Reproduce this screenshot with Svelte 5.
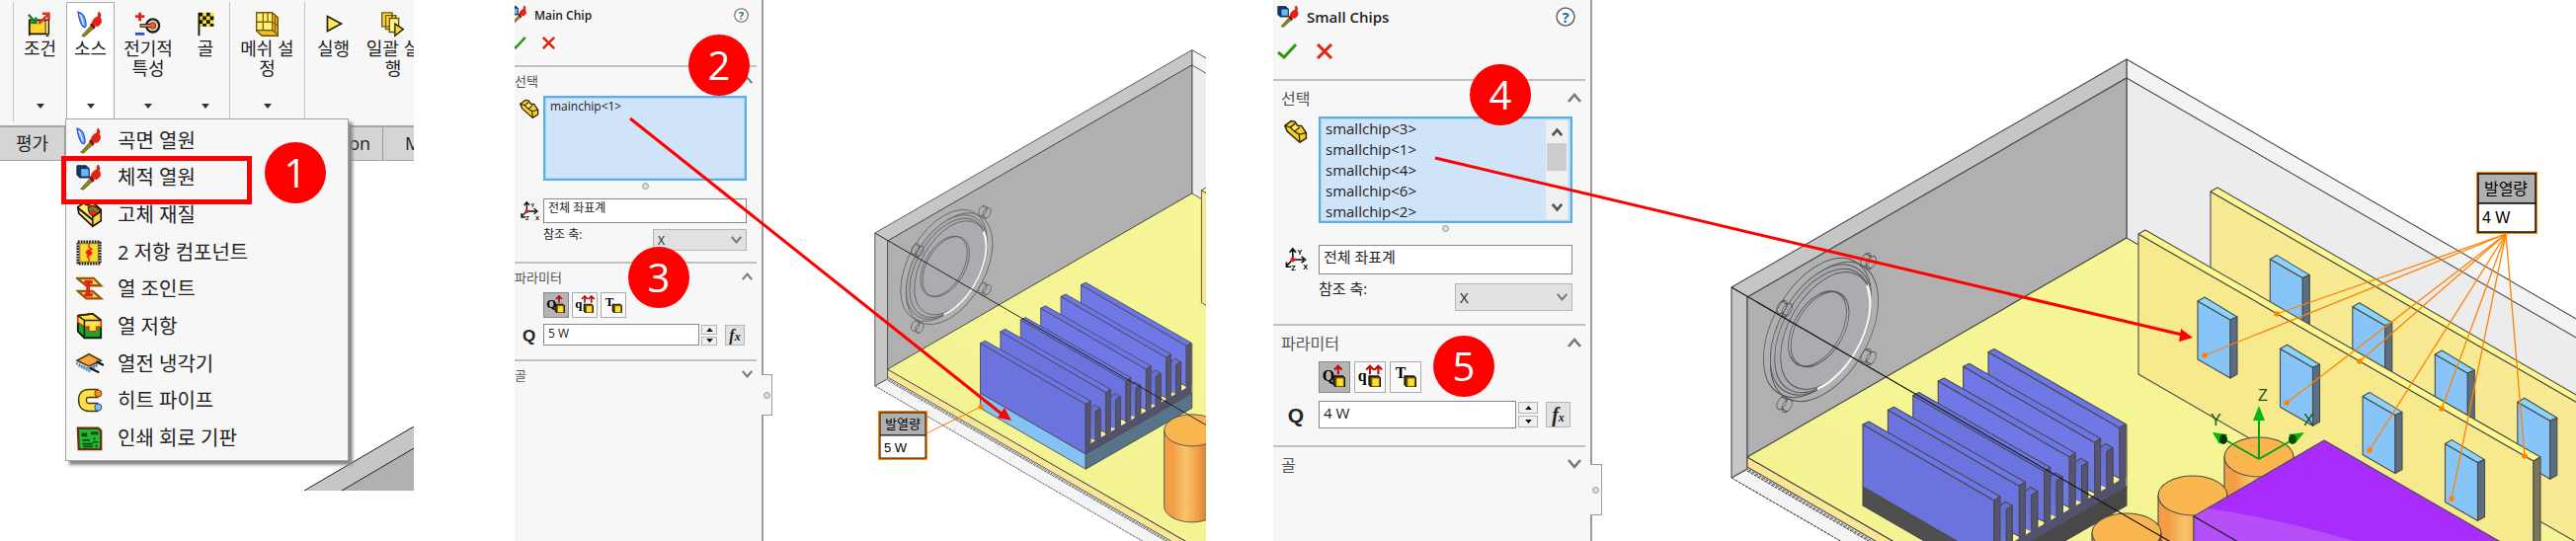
<script>
  const ribbon = [
    { label: '조건', icon: 'condition', size: 'w53', arrow: true },
    { label: '소스', icon: 'source', size: 'w49', arrow: true, active: true },
    { label: '전기적 특성', icon: 'electric', size: 'w68', arrow: true },
    { label: '골', icon: 'goal', size: 'w49', arrow: true, divider: true },
    { label: '메쉬 설정', lines: ['메쉬 설', '정'], icon: 'mesh', size: 'w76', arrow: true, divider: true },
    { label: '실행', icon: 'run', size: 'w57' },
    { label: '일괄 실행', lines: ['일괄 실', '행'], icon: 'batch', size: 'w64' },
  ];

  const menuItems = [
    { label: '곡면 열원', icon: 'source' },
    { label: '체적 열원', icon: 'volume' },
    { label: '고체 재질', icon: 'solid' },
    { label: '2 저항 컴포넌트', icon: 'resistor' },
    { label: '열 조인트', icon: 'joint' },
    { label: '열 저항', icon: 'resistance' },
    { label: '열전 냉각기', icon: 'cooler' },
    { label: '히트 파이프', icon: 'pipe' },
    { label: '인쇄 회로 기판', icon: 'pcb' },
  ];

  const mainChips = ['mainchip<1>'];
  const smallChips = ['smallchip<3>', 'smallchip<1>', 'smallchip<4>', 'smallchip<6>', 'smallchip<2>'];

  let mainPower = $state('5 W');
  let smallPower = $state('4 W');

  // heatsink fins, back to front
  const fins = [5, 4, 3, 2, 1, 0].map((i) => ({ x: 1886 + i * 25.4, y: 430 - i * 14.7 }));

  const chips = [0, 1, 2, 3].map((i) => ({ x: 2225 + i * 83.5, y: 305 + i * 48.2 }));

  const cylinders = [
    [2287, 463],
    [2220, 502],
    [2153, 540],
  ];

  const screws = [
    [1889, 263],
    [1804, 311],
    [1889, 360],
    [1804, 408],
  ];

  const leaders = [
    [2305, 318],
    [2232, 360],
    [2389, 366],
    [2315, 408],
    [2472, 414],
    [2399, 456],
    [2556, 462],
    [2482, 505],
  ];
</script>

{#snippet torch()}
  <path d="M5 27 L15 16 L18 19 L8 28 Z" fill="#8d8420" stroke="#4d4708" stroke-width=".7" />
  <path d="M14 15 q1-2 3-1 l3 3 q0 2-2 3 z" fill="#8c0d05" />
  <path d="M16 14 Q17 8 23 6 Q22 2 24 1 Q27 5 25 7 Q29 13 22 17 Z" fill="#f01c0c" stroke="#8c1005" stroke-width=".6" />
{/snippet}

{#snippet icon(name)}
  <svg class="glyph" viewBox="0 0 30 30" aria-hidden="true">
    {#if name === 'source'}
      <path d="M1 1 Q8 3 9 10 Q11 17 8 18 Q3 16 1 1 Z" fill="#69a8fb" stroke="#1e49ca" stroke-width="1.2" />
      <path d="M3 4 Q6 9 7 15" fill="none" stroke="#d5eaff" stroke-width="1.5" />
      {@render torch()}
    {:else if name === 'volume'}
      <path d="M1 2 h10 l3 3 v10 h-10 l-3-3 z" fill="#173a68" stroke="#06152c" />
      <path d="M5 5 h9 v9 h-9 z" fill="#67b5fa" stroke="#102b51" />
      {@render torch()}
    {:else if name === 'condition'}
      <path d="M3 10 h18 v15 h-18 z" fill="#ffd52d" stroke="#231b00" stroke-width="2" />
      <path d="M21 10 h3 v15 h-3 M3 25 v2 M21 27 h3" fill="#fff2a8" stroke="#231b00" stroke-width="1.5" />
      <path d="M2 4 L10 13 M10 7 v6 h-6" fill="none" stroke="#147d35" stroke-width="2.5" />
      <path d="M13 14 L24 3 M17 3 h7 v7" fill="none" stroke="#e53122" stroke-width="2.8" />
    {:else if name === 'electric'}
      <path d="M6 2 v9 M1 6 h10" stroke="#e02020" stroke-width="3" />
      <path d="M1 25 h10" stroke="#2451dc" stroke-width="3" />
      <circle cx="20" cy="16" r="7" fill="#ddd" stroke="#222" stroke-width="2.5" />
      <circle cx="20" cy="16" r="3.5" fill="#ee5c24" stroke="#8c2a08" />
      <path d="M6 16 h11" stroke="#222" stroke-width="4" />
      <path d="M7 16 h10" stroke="#e7883c" stroke-width="2" />
    {:else if name === 'goal'}
      <path d="M8 2 h16 v15 h-16 z" fill="#f6e32e" />
      <path d="M8 2 h4 v4 h-4 z M16 2 h4 v4 h-4 z M12 6 h4 v4 h-4 z M20 6 h4 v4 h-4 z M8 10 h4 v4 h-4 z M16 10 h4 v4 h-4 z M12 14 h4 v3 h-4 z M20 14 h4 v3 h-4 z" fill="#15130a" />
      <path d="M8 2 V27" stroke="#15130a" stroke-width="2" />
    {:else if name === 'mesh'}
      <path d="M3 2 h17 l6 5 v20 h-17 l-6-5 z" fill="#f3bf24" stroke="#6b4c06" stroke-width="1.5" />
      <path d="M3 2 h17 v19 h-17 z" fill="#fff07a" stroke="#6b4c06" stroke-width="1.2" />
      <path d="M3 12 h17 M10 2 v19 M15 2 v10 M20 12 l6 4 M20 21 l6 5 M23 5 v19" stroke="#8a640a" stroke-width="1.5" />
    {:else if name === 'run'}
      <path d="M8 6 L23 14 L8 22 Z" fill="#f9e95b" stroke="#29240a" stroke-width="1.8" />
    {:else if name === 'batch'}
      <path d="M3 2 h11 v15 h-11 z M7 5 h11 v15 h-11 z" fill="#fbe04c" stroke="#725305" stroke-width="1.5" />
      <path d="M11 8 h10 v15 h-10 z" fill="#fff48c" stroke="#725305" stroke-width="1.5" />
      <path d="M17 14 L26 20 L17 27 Z" fill="#f9df32" stroke="#29240a" stroke-width="1.5" />
    {:else if name === 'solid'}
      <path d="M2 6 L8 2 L13 4 L18 1 L27 9 L27 21 L18 27 L3 13 Z" fill="#fdec77" stroke="#151000" stroke-width="1.8" />
      <path d="M13 6 Q18 3 22 6 L27 10 L19 16 Q13 15 13 6 Z" fill="#e22718" stroke="#151000" />
      <path d="M14 9 Q19 6 24 11" fill="none" stroke="#3ba820" stroke-width="2.5" />
      <path d="M18 17 L27 11 V21 L18 27 Z" fill="#f8d744" stroke="#151000" stroke-width="1.5" />
      <path d="M2 7 L18 20" stroke="#151000" stroke-width="2" />
    {:else if name === 'resistor'}
      <path d="M2 3 h24 v24 h-24 z" fill="none" stroke="#222" stroke-width="3" stroke-dasharray="2 1" />
      <path d="M4 5 h20 v20 h-20 z" fill="#ffd92e" stroke="#70550a" />
      <path d="M14 5 v4 l3 2 -5 2 4 4 -4 2 2 2 v4" fill="none" stroke="#a62b12" stroke-width="1.3" />
      <path d="M14 11 l4 4 -4 4 -4-4 z" fill="#f51515" />
    {:else if name === 'joint'}
      <path d="M1 3 h18 l8 8 h-16 z M2 17 h16 l9 8 h-16 z" fill="#ffd85d" stroke="#95580a" stroke-width="2.5" />
      <path d="M9 7 h9 M13 7 v14 M9 21 h9" stroke="#e92012" stroke-width="4" />
    {:else if name === 'resistance'}
      <path d="M2 3 L18 1 L27 8 V27 H9 L2 20 Z" fill="#19a52b" stroke="#07200a" stroke-width="2" />
      <path d="M2 3 L18 1 L27 8 V15 h-5 v5 h-8 v-5 h-5 L2 10 Z" fill="#ffe543" stroke="#e33514" stroke-width="1.5" />
      <path d="M2 3 L9 8 V27 M9 8 H27 M2 3 L18 1 L27 8" fill="none" stroke="#2a1e00" stroke-width="1.7" />
    {:else if name === 'cooler'}
      <path d="M0 14 L13 20 L27 12 M3 16 L14 22 L23 16" stroke="#548fbd" stroke-width="3" stroke-dasharray="2 1" fill="none" />
      <path d="M1 11 L14 4 L27 11 L14 17 Z" fill="#f6a93b" stroke="#593607" stroke-width="1.7" />
      <path d="M22 12 L30 16 M15 19 L25 24" stroke="#111" stroke-width="2.3" />
    {:else if name === 'pipe'}
      <path d="M24 7 H14 Q7 7 7 14 Q7 22 14 22 H24" fill="none" stroke="#473500" stroke-width="10" />
      <path d="M24 7 H14 Q7 7 7 14 Q7 22 14 22 H24" fill="none" stroke="#ffdf48" stroke-width="7" />
      <circle cx="24" cy="7" r="3.8" fill="#f38b1d" stroke="#6a3608" />
      <circle cx="24" cy="22" r="3.8" fill="#7bc0f5" stroke="#1c4c76" />
    {:else if name === 'pcb'}
      <path d="M2 4 h22 l3 3 v20 h-24 z" fill="#20bb31" stroke="#64300f" stroke-width="2.5" />
      <path d="M6 9 h6 v4 h-6 z M16 8 h8 v3 h-8 z" fill="#084514" />
      <path d="M7 17 h8 M7 21 h11 M8 24 h10 M20 14 v3 M18 19 h6 M22 22 v3" stroke="#084514" stroke-width="1.8" />
    {:else if name === 'part'}
      <path d="M1 8 L9 2 L14 3 L17 8 L22 8 L28 17 V24 L20 29 L4 15 Z" fill="#f7cf29" stroke="#2a1f00" stroke-width="1.8" />
      <path d="M1 8 L8 10 L13 15 L19 19 L20 29 M8 10 L14 5 M13 15 L20 10 M19 19 L28 17" fill="none" stroke="#2a1f00" stroke-width="1.6" />
      <path d="M10 10 L15 7 L17 11 L13 14 Z" fill="#fff27d" />
    {:else if name === 'axes'}
      <path d="M11 15 V3 M7 6 L11 1 L15 6 M11 15 H25 M22 11 L27 15 L22 19 M11 15 L3 23 M3 18 V24 H9" fill="none" stroke="#111" stroke-width="2" />
      <circle cx="11" cy="15" r="3" fill="#f01818" />
      <text x="17" y="9" class="axis">Y</text>
      <text x="24" y="28" class="axis">X</text>
      <text x="9" y="29" class="axis">Z</text>
    {/if}
  </svg>
{/snippet}

{#snippet chevron(down)}
  <svg class="chevron" viewBox="0 0 14 10" aria-hidden="true">
    <path d={down ? 'M1 1 L7 8 L13 1' : 'M1 9 L7 2 L13 9'} fill="none" stroke="#777" stroke-width="2.6" />
  </svg>
{/snippet}

{#snippet powerIcon(letter, arrows)}
  <svg viewBox="0 0 32 32" aria-hidden="true">
    <text x={letter === 'T' ? 5 : 3} y={letter === 'T' ? 17 : 20} class="letter">{letter}</text>
    {#if arrows > 0}
      <path d={arrows === 2 ? 'M16 13 V5 M12 8 L16 4 L20 8 M25 13 V5 M21 8 L25 4 L29 8' : 'M20 13 V5 M16 8 L20 4 L24 8'} fill="none" stroke="#bd0d0d" stroke-width="2.3" />
    {/if}
    <path d="M15 15 h10 l2 2 v9 h-10 l-2-2 z" fill="#4a3b00" stroke="#171200" stroke-width="1.5" />
    <path d="M18 17 h8 v9 h-8 z" fill="#ffdd35" stroke="#806300" />
  </svg>
{/snippet}

{#snippet propertyPanel(id, title, names, power, setPower, scroll)}
  <form class="panel" class:large={scroll} onsubmit={(e) => e.preventDefault()}>
    <header>
      {@render icon('volume')}
      <h2>{title}</h2>
      <button type="button" class="plain help" aria-label="help">
        <svg viewBox="0 0 20 20"><circle cx="10" cy="10" r="9" fill="#fff" stroke="#666" stroke-width="1.5" /><text x="10" y="15.5" text-anchor="middle" class="question">?</text></svg>
      </button>
    </header>
    <div class="actions">
      <button class="plain" aria-label="OK">
        <svg viewBox="0 0 20 16"><path d="M1 9 L7 14 L19 1" fill="none" stroke="#2c9a12" stroke-width="3" /></svg>
      </button>
      <button type="button" class="plain" aria-label="cancel">
        <svg viewBox="0 0 20 16"><path d="M3 1 L17 15 M17 1 L3 15" fill="none" stroke="#dc2412" stroke-width="3" /></svg>
      </button>
    </div>

    <section>
      <h3>선택 {@render chevron(false)}</h3>
      <div class="row">
        <span class="side">{@render icon('part')}</span>
        <div class="list">
          <ul>
            {#each names as name}
              <li>{name}</li>
            {/each}
          </ul>
          {#if scroll}
            <div class="scrollbar">
              {@render chevron(false)}
              <span class="thumb"></span>
              {@render chevron(true)}
            </div>
          {/if}
        </div>
      </div>
      <div class="grip"><i></i></div>
      <div class="row">
        <label class="side" for="{id}-csys" aria-label="좌표계">{@render icon('axes')}</label>
        <input id="{id}-csys" class="csys" value="전체 좌표계" />
      </div>
      <div class="row reference">
        <label for="{id}-axis">참조 축:</label>
        <div class="drop">
          <select id="{id}-axis"><option>X</option></select>
          {@render chevron(true)}
        </div>
      </div>
    </section>

    <section class="parameters">
      <h3>파라미터 {@render chevron(false)}</h3>
      <div class="modes">
        <button type="button" class="pressed" aria-label="Q">{@render powerIcon('Q', 1)}</button>
        <button type="button" aria-label="q">{@render powerIcon('q', 2)}</button>
        <button type="button" aria-label="T">{@render powerIcon('T', 0)}</button>
      </div>
      <div class="row power">
        <label class="side" for="{id}-q">Q</label>
        <input id="{id}-q" value={power} oninput={(e) => setPower(e.target.value)} />
        <div class="spin">
          <button type="button" aria-label="up"><svg viewBox="0 0 10 6"><path d="M0 6 L5 0 L10 6 Z" fill="#111" /></svg></button>
          <button type="button" aria-label="down"><svg viewBox="0 0 10 6"><path d="M0 0 L5 6 L10 0 Z" fill="#111" /></svg></button>
        </div>
        <button type="button" class="fx"><b>f</b><small>x</small></button>
      </div>
    </section>

    <section>
      <h3>골 {@render chevron(true)}</h3>
    </section>
    <span class="handle"><i></i></span>
  </form>
{/snippet}

{#snippet smallChip(x, y)}
  <g transform="translate({x} {y})">
    <path d="M0 0 L33 19 V78 L0 59 Z" fill="#87c5f8" />
    <path d="M0 0 L7 -4 L40 16 L33 19 Z" fill="#8cd3fa" />
    <path d="M33 19 L40 16 V74 L33 78 Z" fill="#5b6f80" />
  </g>
{/snippet}

<!-- open enclosure with the board, heatsink, capacitors and chip cards -->
{#snippet assembly(id, baseFront, baseSide)}
  <defs>
    <linearGradient id="{id}-copper">
      <stop offset="0" stop-color="#f2a04a" />
      <stop offset=".15" stop-color="#f39d45" />
      <stop offset=".38" stop-color="#f7c56c" />
      <stop offset=".62" stop-color="#f29b45" />
      <stop offset="1" stop-color="#8a6238" />
    </linearGradient>
    <linearGradient id="{id}-floor" x1="0" y1="1" x2=".6" y2="0">
      <stop offset="0" stop-color="#f1f08e" />
      <stop offset="1" stop-color="#f8f798" />
    </linearGradient>
  </defs>
  <g class="lines">
    <path d="M2153 60 L2700 376 V700 H2153 Z" fill="#f3f3f3" />
    <path d="M2153 79 L2700 395 V700 H2153 Z" fill="#ececec" />
    <path d="M1753 484 L1769 475 L2153 697 L2120 697 Z" fill="#f4f4f4" stroke-dasharray="3 1" />
    <path d="M1753 291 L2153 60 V79 L1769 301 V475 L1753 484 Z" fill="#c6c6c6" />
    <path d="M1769 301 L2153 79 V241 L1769 463 Z" fill="#b0b0b0" />
    <path d="M1769 463 L2300 770 V780 L1769 473 Z" fill="#fae795" />
    <path d="M1769 463 L2153 241 L2700 557 V1000 Z" fill="url(#{id}-floor)" />
    <path d="M1769 477 L2200 726" fill="none" stroke-dasharray="3 1" />

    <g class="fan" transform="matrix(.866 -.5 0 1 1840 332)">
      <circle r="63" />
      <circle cx="8" cy="8" r="63" />
      <circle cx="4" cy="4" r="59" fill="#a9aaae" />
      <circle cx="6" cy="6" r="56" />
      <circle cx="10" cy="8" r="53" fill="#abacb2" />
      <path d="M58 -14 A56 56 0 0 1 0 62" class="glare" />
      <circle cx="3" cy="3" r="34" />
      <circle cx="0" cy="1" r="34" />
    </g>
    {#each screws as [x, y]}
      <g class="fan" transform="matrix(.866 -.5 0 1 {x} {y})">
        <circle r="6" />
        <circle cx="6" cy="6" r="6" />
        <path d="M0 -6 L6 0 M0 6 L6 12" />
      </g>
    {/each}

    <path d="M2238 194 L2700 460 V602 L2238 336 Z" fill="#f7ea93" />
    <path d="M2238 194 L2245 190 L2700 453 V460 Z" fill="#fdf992" />
    {#each chips as chip}
      {@render smallChip(chip.x + 73.3, chip.y - 42.4)}
    {/each}
    <path d="M2165 237 L2565 467 V610 L2165 379 Z" fill="#f7ea8d" />
    <path d="M2165 237 L2172 233 L2572 463 L2565 467 Z" fill="#fdf98f" />
    <path d="M2565 467 L2572 463 V610 H2565 Z" fill="#7b7559" />
    {#each chips as chip}
      {@render smallChip(chip.x, chip.y)}
    {/each}

    <path d="M1886 493 L2019 570 V589 L1886 512 Z" fill={baseFront} />
    <path d="M2019 570 L2153 493 V512 L2019 589 Z" fill={baseSide} />
    {#each fins as fin, i}
      <g transform="translate({fin.x} {fin.y})">
        <path d="M0 0 L133 77 V{i === 5 ? 140 : 128} L0 63 Z" fill={i < 3 ? '#7078e6' : '#6b73df'} />
        <path d="M0 0 L6 -3 L139 73 L133 77 Z" fill="#6b76eb" />
        <path d="M133 77 L139 73 V126 L133 130 Z" fill="#555573" />
        {#if i < 5}
          <path d="M80 71 L120 101 V138 L80 120 Z" fill="#6d76dd" stroke="none" />
          <path d="M113 97 L119 93 L126 97 L120 101 V138 M120 101 L126 97 V134" fill="#666fd8" />
          <path d="M120 101 L126 97 V134 L120 138 Z" fill="#555573" />
        {/if}
      </g>
    {/each}
    <path d="M2019 560 L2152 483 V493 L2019 570 Z" fill="#52526f" stroke="none" />
    <path d="M2019 507 V570 L2153 493 V430" fill="none" />

    {#each cylinders as [x, y]}
      <path d="M{x - 35} {y} V{y + 96} A35 20 0 0 0 {x + 35} {y + 96} V{y} Z" fill="url(#{id}-copper)" />
      <ellipse cx={x} cy={y} rx="35" ry="20" fill="#f9b64e" />
    {/each}
    <path d="M2221 523 L2353 446 L2700 646 V800 H2221 Z" fill="#a92bfd" />
    <path d="M2221 523 L2700 800 H2221 Z" fill="#b250f9" />
    <path d="M2236 515 Q2310 526 2390 550 H2268 L2222 523 Z" fill="#b64ff8" stroke="none" />
    <path d="M2221 523 L2700 800" stroke="#222" fill="none" />
    <path d="M1753 291 L2196 548 L2240 574" stroke="#111" fill="none" />
  </g>
{/snippet}

<main>
  <figure class="command">
    <svg class="corner" viewBox="0 0 111 65" aria-hidden="true">
      <path d="M0 65 L111 0 V65 Z" fill="#c6c6c6" />
      <path d="M38 65 L111 22 V65 Z" fill="#b0b0b0" />
      <path d="M0 65 L111 0 M38 65 L111 22" stroke="#222" fill="none" />
    </svg>
    <nav class="ribbon">
      <span class="edge"></span>
      {#each ribbon as tool}
        <button class="tool {tool.size}" class:active={tool.active} class:divider={tool.divider}>
          {@render icon(tool.icon)}
          <span class="caption">
            {#each tool.lines ?? tool.label.split(' ') as line}
              <span>{line}</span>
            {/each}
          </span>
          {#if tool.arrow}
            <svg class="caret" viewBox="0 0 8 5" aria-hidden="true"><path d="M0 0 H8 L4 5 Z" fill="#30343a" /></svg>
          {/if}
        </button>
      {/each}
    </nav>
    <div class="tabs">
      <button class="first">평가</button>
      <button class="second">on</button>
      <button>M</button>
    </div>
    <ul class="menu">
      {#each menuItems as item}
        <li><button>{@render icon(item.icon)}{item.label}</button></li>
      {/each}
    </ul>
    <span class="highlight"></span>
    <span class="badge one">1</span>
  </figure>

  <figure class="step">
    {@render propertyPanel('main', 'Main Chip', mainChips, mainPower, (v) => (mainPower = v), false)}
    <svg class="scene" viewBox="773 0 448 548" preserveAspectRatio="xMinYMin slice">
      <g transform="translate(-521 2.5) scale(.8025)">
        {@render assembly('a', '#83c2f4', '#587488')}
      </g>
      <path d="M938 439 L993 412" stroke="#ff8200" />
      <circle cx="993" cy="412" r="2.5" fill="#ff8200" />
      <g class="tag">
        <rect x="889" y="416" width="50" height="50" fill="#ff8200" />
        <path d="M891 418 h46 v23 h-46 z" fill="#b0b0b0" stroke="#111" />
        <path d="M891 441 h46 v23 h-46 z" fill="#fff" stroke="#111" />
        <text x="914" y="434" text-anchor="middle" font-size="13">발열량</text>
        <text x="895" y="458" font-size="13">5 W</text>
      </g>
    </svg>
    <svg class="pointer" viewBox="521 0 700 548" preserveAspectRatio="xMinYMin slice" aria-hidden="true">
      <path d="M638 120 L1015 420" stroke="#f00" stroke-width="3" />
      <path d="M1024 426 L1010 423 L1017 413 Z" fill="#f00" />
    </svg>
    <span class="badge two">2</span>
    <span class="badge three">3</span>
  </figure>

  <figure class="step">
    {@render propertyPanel('small', 'Small Chips', smallChips, smallPower, (v) => (smallPower = v), true)}
    <svg class="scene" viewBox="1612 0 996 548" preserveAspectRatio="xMinYMin slice">
      {@render assembly('b', '#4f4f4f', '#484848')}
      <g stroke="#00a40e" stroke-width="2" fill="#00b80e">
        <path d="M2287 465 V420 M2287 465 L2322 445 M2287 465 L2250 444" fill="none" />
        <path d="M2287 411 L2281 426 H2293 Z" stroke="none" />
        <path d="M2333 438 L2317 440 L2324 449 Z" stroke="none" />
        <path d="M2240 438 L2255 440 L2247 450 Z" stroke="none" />
        <ellipse cx="2321" cy="445" rx="4" ry="5" fill="#064c0a" stroke="none" />
        <ellipse cx="2251" cy="445" rx="4" ry="5" fill="#053508" stroke="none" />
      </g>
      <g class="triad">
        <text x="2286" y="406">Z</text>
        <text x="2332" y="431">X</text>
        <text x="2238" y="431">Y</text>
      </g>
      {#each leaders as [x, y]}
        <path d="M2537 237 L{x} {y}" stroke="#ff8200" stroke-width="1.3" />
        <circle cx={x} cy={y} r="2.8" fill="#ff8200" />
      {/each}
      <g class="tag">
        <rect x="2507" y="174" width="62" height="63" fill="#ff8200" />
        <path d="M2509 176 h58 v30 h-58 z" fill="#b0b0b0" stroke="#111" stroke-width="1.5" />
        <path d="M2509 206 h58 v29 h-58 z" fill="#fff" stroke="#111" stroke-width="1.5" />
        <text x="2537" y="197" text-anchor="middle" font-size="16">발열량</text>
        <text x="2513" y="226" font-size="16">4 W</text>
      </g>
    </svg>
    <svg class="pointer" viewBox="1289 0 1319 548" preserveAspectRatio="xMinYMin slice" aria-hidden="true">
      <path d="M1453 160 L2209 339" stroke="#f00" stroke-width="3" />
      <path d="M2220 342 L2206 346 L2208 333 Z" fill="#f00" />
    </svg>
    <span class="badge four">4</span>
    <span class="badge five">5</span>
  </figure>
</main>

<style>
  :global(body) {
    margin: 0;
    background: #fff;
  }

  main {
    display: grid;
    grid-template-columns: 419fr 102px 700fr 68px 1319fr;
    min-height: 100vh;
    overflow: hidden;
    color: #222;
    font-family: 'Open Sans', 'Noto Sans CJK KR', sans-serif;
  }

  main > :nth-child(2) {
    grid-column: 3;
  }

  main > :nth-child(3) {
    grid-column: 5;
  }

  figure {
    position: relative;
    margin: 0;
    min-width: 0;
    overflow: hidden;
  }

  button,
  input,
  select {
    box-sizing: border-box;
    margin: 0;
    padding: 0;
    color: inherit;
    font: inherit;
  }

  ul {
    margin: 0;
    padding: 0;
    list-style: none;
  }

  svg {
    display: block;
  }

  .glyph {
    flex: none;
    width: 28px;
    height: 28px;
  }

  .axis {
    font: bold 9px 'Liberation Sans', sans-serif;
  }

  /* ribbon and menu */
  .command {
    height: 497px;
  }

  .corner {
    position: absolute;
    right: 0;
    bottom: 0;
    width: 111px;
    height: 65px;
  }

  .ribbon {
    display: flex;
    box-sizing: border-box;
    height: 127px;
    padding: 2px 0 4px;
    background: #f7f7f7;
  }

  .edge {
    flex: none;
    box-sizing: border-box;
    width: 14px;
    border-right: 1px solid #c4c4c4;
  }

  .tool {
    display: flex;
    flex: none;
    flex-direction: column;
    align-items: center;
    padding: 9px 0 13px;
    border: 0;
    background: none;
    font-size: 18px;
    line-height: 20px;
  }

  .tool.active {
    border: 1px solid #aaa;
    background: #fff;
    padding: 8px 0 12px;
  }

  .tool.divider {
    border-right: 1px solid #c4c4c4;
  }

  .w49 { width: 49px; }
  .w53 { width: 53px; }
  .w57 { width: 57px; }
  .w64 { width: 64px; }
  .w68 { width: 68px; }
  .w76 { width: 76px; }

  .caption {
    display: flex;
    flex-direction: column;
    white-space: nowrap;
  }

  .caret {
    width: 8px;
    height: 5px;
    margin-top: auto;
  }

  .tabs {
    display: flex;
    height: 33px;
    border-top: 2px solid #a5a5a5;
    border-bottom: 1px solid #a5a5a5;
    background: #d4d4d4;
  }

  .tabs button {
    flex: none;
    border: 0;
    border-right: 1px solid #999;
    background: none;
    font-size: 18px;
    line-height: 33px;
  }

  .tabs .first {
    width: 66px;
  }

  .tabs .second {
    width: 322px;
    padding-right: 12px;
    text-align: right;
  }

  .tabs button:last-child {
    padding-left: 22px;
  }

  .menu {
    position: absolute;
    top: 120px;
    left: 66px;
    display: grid;
    grid-auto-rows: 1fr;
    box-sizing: border-box;
    width: 287px;
    height: 347px;
    padding: 3px 0;
    border: 1px solid #a4a4a4;
    background: #f7f7f7;
    box-shadow: 4px 4px 3px #888;
  }

  .menu button {
    display: flex;
    align-items: center;
    gap: 14px;
    width: 100%;
    height: 100%;
    padding-left: 10px;
    border: 0;
    background: none;
    font-size: 20px;
    line-height: 24px;
  }

  .highlight {
    position: absolute;
    top: 158px;
    left: 62px;
    box-sizing: border-box;
    width: 193px;
    height: 49px;
    border: 5px solid #f00;
  }

  /* numbered steps */
  .badge {
    position: absolute;
    width: 62px;
    height: 62px;
    border-radius: 50%;
    background: #f00;
    color: #fff;
    font-size: 40px;
    line-height: 62px;
    text-align: center;
  }

  .one { top: 144px; left: 268px; }
  .two { top: 35px; left: 176px; }
  .three { top: 250px; left: 115px; }
  .four { top: 65px; left: 199px; }
  .five { top: 340px; left: 162px; }

  .step {
    display: flex;
  }

  .scene {
    flex: 1;
    min-width: 0;
    height: 100%;
  }

  .pointer {
    position: absolute;
    inset: 0;
    width: 100%;
    height: 100%;
    pointer-events: none;
  }

  /* property panel, compact size first */
  .panel {
    --text: 12px;
    --heading: 13px;
    --title-row: 30px;
    --action-row: 27px;
    --head-row: 29px;
    --inset: 0px;
    --side: 29px;
    --icon: 20px;
    --right: 10px;
    --list: 86px;
    --item: 17px;
    --grip-row: 18px;
    --field: 25px;
    --control: 22px;
    --select: 95px;
    --tile: 26px;
    --gap: 6px;
    --bottom: 11px;
    --fx: 20px;
    --spin: 16px;
    --chevron: 11px;
    position: relative;
    flex: none;
    box-sizing: border-box;
    width: 252px;
    border-right: 2px solid #9c9c9c;
    background: #f7f7f7;
    font-size: var(--text);
  }

  .panel.large {
    --text: 15px;
    --heading: 16px;
    --title-row: 33px;
    --action-row: 38px;
    --head-row: 36px;
    --inset: 8px;
    --side: 46px;
    --icon: 24px;
    --right: 13px;
    --list: 108px;
    --item: 21px;
    --grip-row: 22px;
    --field: 30px;
    --control: 28px;
    --select: 119px;
    --tile: 32px;
    --gap: 9px;
    --bottom: 13px;
    --fx: 25px;
    --spin: 20px;
    --chevron: 14px;
    width: 323px;
  }

  header {
    display: flex;
    align-items: center;
    height: var(--title-row);
    padding-right: 13px;
  }

  header .glyph {
    width: var(--icon);
    height: var(--icon);
    margin-left: -6px;
  }

  .large header .glyph {
    margin-left: 4px;
  }

  h2 {
    flex: 1;
    margin: 0 0 0 6px;
    font-size: var(--text);
    font-weight: 600;
  }

  .plain {
    border: 0;
    background: none;
  }

  .help svg {
    width: 15px;
    height: 15px;
  }

  .large .help svg {
    width: 20px;
    height: 20px;
  }

  .large header {
    padding-right: 15px;
  }

  .question {
    fill: #1b6f9c;
    font-size: 15px;
    font-weight: 700;
  }

  .actions {
    display: flex;
    align-items: center;
    gap: 14px;
    height: var(--action-row);
    margin: 0 0 9px -5px;
  }

  .actions svg {
    width: 17px;
    height: 13px;
  }

  .large .actions {
    gap: 18px;
    margin-left: 4px;
  }

  .large .actions svg {
    width: 20px;
    height: 16px;
  }

  section {
    margin-right: 5px;
    padding-bottom: var(--bottom);
    border-top: 2px solid #c0c0c0;
  }

  .parameters {
    padding-bottom: 13px;
  }

  .large .parameters {
    padding-bottom: 17px;
  }

  h3 {
    display: flex;
    align-items: center;
    justify-content: space-between;
    box-sizing: border-box;
    height: var(--head-row);
    margin: 0;
    padding: 0 4px 3px var(--inset);
    color: #555;
    font-size: var(--heading);
    font-weight: 400;
  }

  .chevron {
    flex: none;
    width: var(--chevron);
    height: 10px;
  }

  .row {
    display: flex;
    padding-right: var(--right);
  }

  .side {
    display: flex;
    flex: none;
    justify-content: center;
    width: var(--side);
    padding-top: 3px;
    box-sizing: border-box;
  }

  .side .glyph {
    width: var(--icon);
    height: var(--icon);
  }

  .list {
    display: flex;
    flex: 1;
    box-sizing: border-box;
    min-width: 0;
    height: var(--list);
    overflow: hidden;
    border: 2px solid #59aee5;
    outline: 1px solid #a9d4f4;
    outline-offset: -3px;
    background: #cfe4f8;
    line-height: var(--item);
  }

  .list ul {
    flex: 1;
    padding: 0 5px;
  }

  .scrollbar {
    display: flex;
    flex-direction: column;
    align-items: center;
    width: 22px;
    margin: 2px 3px 2px 0;
    padding: 7px 0;
    box-sizing: border-box;
    background: #f0f0f0;
  }

  .scrollbar .chevron path {
    stroke: #555;
    stroke-width: 3.4;
  }

  .scrollbar .chevron {
    width: 11px;
  }

  .thumb {
    width: 20px;
    height: 28px;
    margin: 6px 0 auto;
    background: #cdcdcd;
  }

  .grip {
    display: flex;
    justify-content: center;
    height: var(--grip-row);
    padding: 2px var(--right) 0 var(--side);
    box-sizing: border-box;
  }

  i {
    box-sizing: border-box;
    width: 7px;
    height: 7px;
    border: 1px solid #999;
    border-radius: 50%;
    background: #ddd;
  }

  input {
    flex: 1;
    min-width: 0;
    height: var(--control);
    padding: 0 4px 4px;
    border: 1px solid #888;
    border-radius: 0;
    background: #fff;
  }

  .csys {
    height: var(--field);
    padding-bottom: 8px;
  }

  .reference {
    justify-content: space-between;
    margin-top: var(--gap);
    padding-left: var(--side);
    line-height: 11px;
  }

  .drop {
    position: relative;
    width: var(--select);
    height: var(--control);
  }

  select {
    width: 100%;
    height: 100%;
    padding-left: 4px;
    appearance: none;
    border: 1px solid #b5b5b5;
    border-radius: 0;
    background: #e1e1e1;
  }

  .drop .chevron {
    position: absolute;
    top: 50%;
    right: 5px;
    width: 11px;
    height: 8px;
    margin-top: -4px;
  }

  .modes {
    display: flex;
    gap: 3px;
    margin-bottom: 6px;
    padding-left: var(--side);
  }

  .large .modes {
    gap: 4px;
    margin-bottom: 8px;
  }

  .modes button {
    width: var(--tile);
    height: var(--tile);
    border: 1px solid #aaa;
    background: #fafafa;
  }

  .modes .pressed {
    border-color: #888;
    background: #b4b4b4;
  }

  .letter {
    font: bold 17px 'Liberation Serif', serif;
  }

  .row.power {
    padding-right: calc(var(--right) + 2px);
  }

  .power .side {
    font: bold 17px 'Liberation Sans', sans-serif;
  }

  .large .power .side {
    font-size: 21px;
  }

  .spin {
    display: flex;
    flex-direction: column;
    justify-content: space-between;
    width: var(--spin);
    margin: 1px 8px 1px 2px;
  }

  .spin button {
    display: grid;
    flex: 1;
    place-items: center;
    border: 1px solid #b5b5b5;
    background: #f0f0f0;
  }

  .spin button + button {
    margin-top: 2px;
  }

  .spin svg {
    width: 7px;
    height: 4px;
  }

  .fx {
    width: var(--fx);
    margin: 1px 0;
    border: 1px solid #b5b5b5;
    background: #e1e1e1;
    font: italic bold 16px/1 'Liberation Serif', serif;
  }

  .large .fx {
    font-size: 20px;
  }

  .fx small {
    font-size: 12px;
  }

  .handle {
    position: absolute;
    top: 379px;
    right: -11px;
    display: grid;
    place-items: center;
    box-sizing: border-box;
    width: 11px;
    height: 42px;
    border: 1px solid #9c9c9c;
    border-left: 0;
    background: #f7f7f7;
  }

  .large .handle {
    top: 470px;
    right: -12px;
    width: 12px;
    height: 52px;
  }

  /* model view */
  .lines {
    stroke: #4a4a4a;
    stroke-width: 1.1;
    stroke-linejoin: round;
  }

  .fan {
    fill: none;
    stroke: #555;
    stroke-width: 0.9;
  }

  .glare {
    stroke: #f3f3f3;
    stroke-width: 3;
  }

  .tag {
    font-family: 'Liberation Sans', 'Noto Sans CJK KR', sans-serif;
  }

  .triad {
    fill: #0b5a10;
    font: 16px 'Liberation Sans', sans-serif;
  }
</style>
